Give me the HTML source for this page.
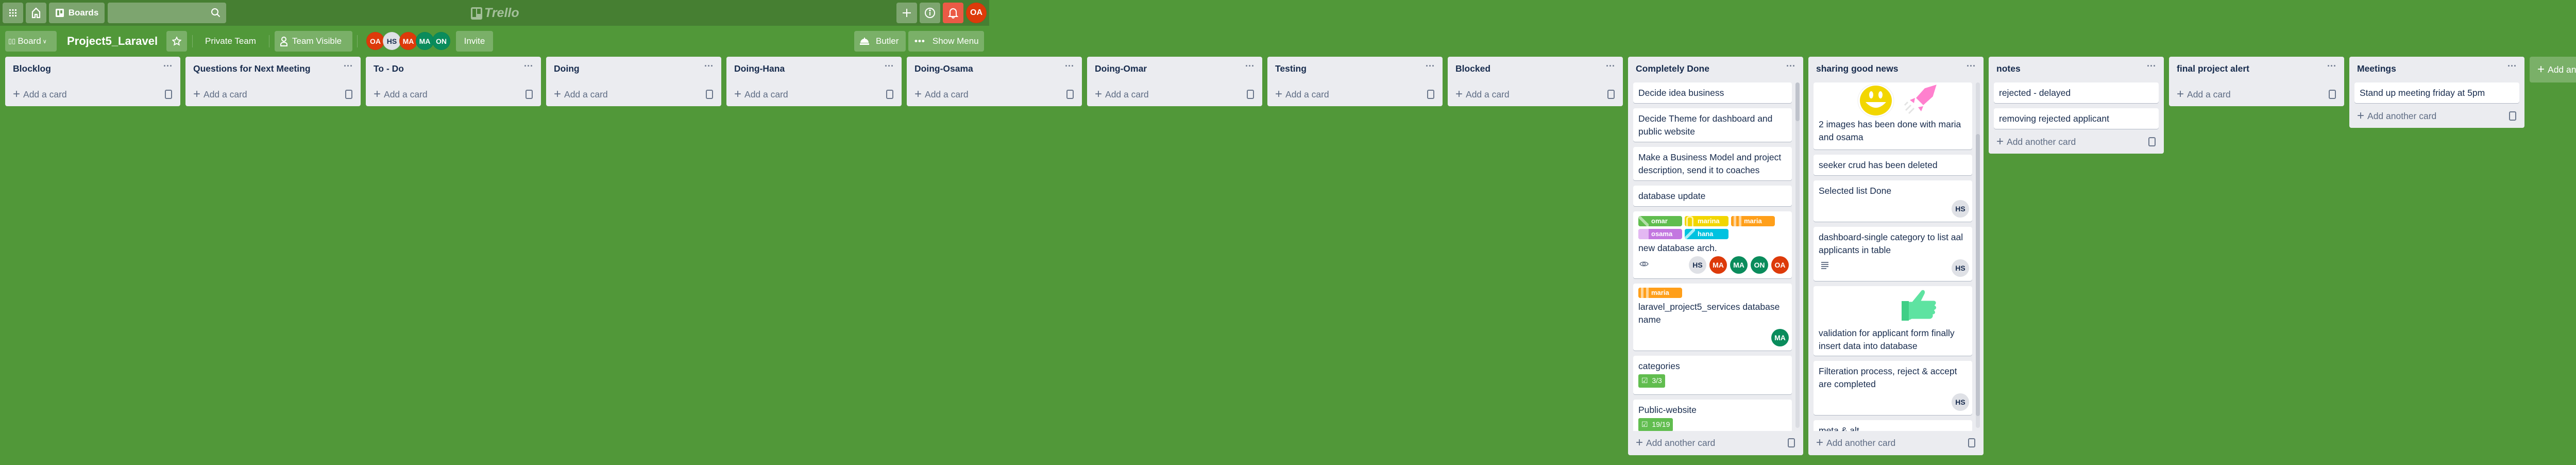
<!DOCTYPE html>
<html><head><meta charset="utf-8"><style>
*{box-sizing:border-box;margin:0;padding:0}
body{width:5260px;height:902px;overflow:hidden;background:#519839;font-family:"Liberation Sans",sans-serif;color:#172b4d;position:relative}
.top{position:absolute;left:0;top:0;width:1920px;height:50px;background:#467f32}
.hb{position:absolute;top:5px;height:40px;background:rgba(255,255,255,.3);border-radius:4px;color:#fff;display:flex;align-items:center;justify-content:center;font-size:17px;font-weight:bold}
.bb{position:absolute;top:60px;height:40px;border-radius:4px;color:#fff;display:flex;align-items:center;font-size:17px;padding:0 10px}
.bg{background:rgba(255,255,255,.24)}
.sep{position:absolute;top:68px;width:1px;height:24px;background:rgba(255,255,255,.25)}
.av{position:absolute;width:35px;height:35px;border-radius:50%;color:#fff;font-size:14px;font-weight:bold;display:flex;align-items:center;justify-content:center;border:1px solid rgba(0,0,0,.05)}
.list{position:absolute;top:110px;width:340px;background:#ebecf0;border-radius:4px}
.lh{height:50px;padding:13px 12px 0 15px;font-size:17.5px;font-weight:bold;position:relative;color:#172b4d}
.dots{position:absolute;right:15px;top:8px;font-size:18px;color:#6b778c;letter-spacing:0px}
.cards{padding:0 10px}
.card{background:#fff;border-radius:4px;box-shadow:0 1px 0 rgba(9,30,66,.25);padding:7.5px 10px;font-size:17.5px;line-height:25px;margin-bottom:10px;position:relative;color:#172b4d}
.add{height:46px;padding:0 15px;display:flex;align-items:center;font-size:17.5px;color:#5e6c84;position:relative}
.add .pl{font-size:24px;margin-right:6px;font-weight:300}
.tmpl{position:absolute;right:16px;top:14px;width:14px;height:18px;border:2px solid #6b778c;border-radius:3px}
.lab{display:inline-block;width:85px;height:20px;border-radius:4px;color:#fff;font-size:13px;font-weight:bold;line-height:20px;padding-left:25px;margin-right:5px;margin-bottom:5px;position:relative;overflow:hidden}
.lab i{position:absolute;left:0;top:0;width:20px;height:20px}
.ca{position:absolute;width:34px;height:34px;border-radius:50%;color:#fff;font-size:14px;font-weight:bold;display:flex;align-items:center;justify-content:center}
.badge{display:inline-flex;align-items:center;background:#61bd4f;color:#fff;border-radius:3px;height:26px;padding:0 6px;font-size:14px;margin-top:3px}
.sb{position:absolute;width:8px;border-radius:4px;background:#dadce2}
.sbt{position:absolute;width:8px;border-radius:4px;background:#bfc3cc}
</style></head><body>
<div class="top">
 <div class="hb" style="left:5px;width:40px"><svg width="16" height="16" viewBox="0 0 16 16" fill="#fff"><rect x="1" y="1" width="3" height="3"/><rect x="6.5" y="1" width="3" height="3"/><rect x="12" y="1" width="3" height="3"/><rect x="1" y="6.5" width="3" height="3"/><rect x="6.5" y="6.5" width="3" height="3"/><rect x="12" y="6.5" width="3" height="3"/><rect x="1" y="12" width="3" height="3"/><rect x="6.5" y="12" width="3" height="3"/><rect x="12" y="12" width="3" height="3"/></svg></div>
 <div class="hb" style="left:50px;width:40px"><svg width="20" height="22" viewBox="0 0 20 22" fill="none" stroke="#fff" stroke-width="2.2"><path d="M3 20V9l7-7 7 7v11h-5v-6H8v6z"/></svg></div>
 <div class="hb" style="left:95px;width:108px"><svg width="18" height="18" viewBox="0 0 18 18" style="margin-right:8px"><rect x="1" y="1" width="16" height="16" rx="2" fill="#fff"/><rect x="4" y="4" width="4" height="10" fill="#6f9f5e"/><rect x="10" y="4" width="4" height="6" fill="#6f9f5e"/></svg>Boards</div>
 <div class="hb" style="left:209px;width:230px;justify-content:flex-end;padding-right:10px"><svg width="20" height="20" viewBox="0 0 20 20" fill="none" stroke="#fff" stroke-width="2"><circle cx="8" cy="8" r="6"/><path d="M12.5 12.5l5 5"/></svg></div>
 <div style="position:absolute;left:914px;top:11px;display:flex;align-items:center;color:rgba(255,255,255,.5);font-size:25px;font-weight:bold;font-style:italic"><svg width="22" height="24" viewBox="0 0 22 24" style="margin-right:4px"><rect x="0" y="0" width="22" height="24" rx="3" fill="rgba(255,255,255,.5)"/><rect x="3" y="3" width="7" height="16" fill="#467f32"/><rect x="12" y="3" width="7" height="10" fill="#467f32"/></svg>Trello</div>
 <div class="hb" style="left:1740px;width:40px"><svg width="20" height="20" viewBox="0 0 20 20" stroke="#fff" stroke-width="2"><path d="M10 2v16M2 10h16"/></svg></div>
 <div class="hb" style="left:1785px;width:40px"><svg width="22" height="22" viewBox="0 0 22 22" fill="none" stroke="#fff" stroke-width="2"><circle cx="11" cy="11" r="9"/><path d="M11 9v7"/><circle cx="11" cy="6" r=".8" fill="#fff"/></svg></div>
 <div class="hb" style="left:1830px;width:40px;background:#eb5a46"><svg width="20" height="22" viewBox="0 0 20 22" fill="none" stroke="#fff" stroke-width="2"><path d="M4 16V9a6 6 0 0112 0v7l2 2H2zM8 19a2 2 0 004 0"/></svg></div>
 <div class="av" style="left:1875px;top:5px;width:40px;height:40px;background:#dd3a0a;font-size:16px">OA</div>
</div>
<div class="bb bg" style="left:10px;width:100px;padding:0 6px"><span style="font-size:13px;margin-right:4px">▯▯</span>Board <span style="font-size:11px;margin-left:3px">∨</span></div>
<div class="bb" style="left:120px;font-size:22px;font-weight:bold">Project5_Laravel</div>
<div class="bb bg" style="left:323px;width:40px;justify-content:center;padding:0"><svg width="18" height="18" viewBox="0 0 20 20" fill="none" stroke="#fff" stroke-width="2"><path d="M10 1.5l2.6 5.5 6 .7-4.5 4.1 1.2 5.9L10 14.8 4.7 17.7l1.2-5.9L1.4 7.7l6-.7z"/></svg></div>
<div class="sep" style="left:373px"></div>
<div class="bb" style="left:388px">Private Team</div>
<div class="sep" style="left:522px"></div>
<div class="bb bg" style="left:533px;width:151px"><svg width="16" height="20" viewBox="0 0 16 20" fill="none" stroke="#fff" stroke-width="2" style="margin-right:8px"><circle cx="8" cy="6" r="4"/><path d="M2 19v-3a6 4 0 0112 0v3z"/></svg>Team Visible</div>
<div class="sep" style="left:693px"></div>
<div class="av" style="left:711px;top:62px;background:#dd3a0a">OA</div>
<div class="av" style="left:743px;top:62px;background:#dfe1e6;color:#172b4d">HS</div>
<div class="av" style="left:775px;top:62px;background:#dd3a0a">MA</div>
<div class="av" style="left:807px;top:62px;background:#0a8c5c">MA</div>
<div class="av" style="left:839px;top:62px;background:#0a8c5c">ON</div>
<div class="bb bg" style="left:885px;width:72px;justify-content:center">Invite</div>
<div class="bb bg" style="left:1658px;width:100px"><svg width="20" height="16" viewBox="0 0 20 16" fill="#fff" style="margin-right:12px"><path d="M2 11a8 8 0 0116 0z"/><rect x="1" y="12" width="18" height="3"/><rect x="9" y="1" width="2" height="3"/></svg>Butler</div>
<div class="bb bg" style="left:1763px;width:147px;padding-left:12px"><span style="margin-right:14px;font-weight:bold;letter-spacing:1px">•••</span>Show Menu</div>

<!-- simple lists -->
<div class="list" style="left:10px"><div class="lh">Blocklog<span class="dots">···</span></div><div class="add"><span class="pl">+</span>Add a card<span class="tmpl"></span></div></div>
<div class="list" style="left:360px"><div class="lh">Questions for Next Meeting<span class="dots">···</span></div><div class="add"><span class="pl">+</span>Add a card<span class="tmpl"></span></div></div>
<div class="list" style="left:710px"><div class="lh">To - Do<span class="dots">···</span></div><div class="add"><span class="pl">+</span>Add a card<span class="tmpl"></span></div></div>
<div class="list" style="left:1060px"><div class="lh">Doing<span class="dots">···</span></div><div class="add"><span class="pl">+</span>Add a card<span class="tmpl"></span></div></div>
<div class="list" style="left:1410px"><div class="lh">Doing-Hana<span class="dots">···</span></div><div class="add"><span class="pl">+</span>Add a card<span class="tmpl"></span></div></div>
<div class="list" style="left:1760px"><div class="lh">Doing-Osama<span class="dots">···</span></div><div class="add"><span class="pl">+</span>Add a card<span class="tmpl"></span></div></div>
<div class="list" style="left:2110px"><div class="lh">Doing-Omar<span class="dots">···</span></div><div class="add"><span class="pl">+</span>Add a card<span class="tmpl"></span></div></div>
<div class="list" style="left:2460px"><div class="lh">Testing<span class="dots">···</span></div><div class="add"><span class="pl">+</span>Add a card<span class="tmpl"></span></div></div>
<div class="list" style="left:2810px"><div class="lh">Blocked<span class="dots">···</span></div><div class="add"><span class="pl">+</span>Add a card<span class="tmpl"></span></div></div>

<!-- Completely Done -->
<div class="list" style="left:3160px;height:773px">
 <div class="lh">Completely Done<span class="dots">···</span></div>
 <div class="cards" style="height:676px;overflow:hidden;padding-right:22px">
  <div class="card">Decide idea business</div>
  <div class="card">Decide Theme for dashboard and public website</div>
  <div class="card">Make a Business Model and project description, send it to coaches</div>
  <div class="card">database update</div>
  <div class="card" style="height:130px">
   <div style="line-height:0;margin-top:1px"><span class="lab" style="background:#61bd4f"><i style="background:linear-gradient(45deg,#61bd4f 40%,#b3dfa8 40%,#b3dfa8 60%,#61bd4f 60%)"></i>omar</span><span class="lab" style="background:#f2d600"><i style="background:#f2d600;border:3px solid #fff3a8;border-bottom:none;border-radius:6px 6px 0 0;width:14px;left:3px"></i>marina</span><span class="lab" style="background:#ff9f1a"><i style="background:linear-gradient(90deg,#ff9f1a 25%,#ffd59a 25%,#ffd59a 50%,#ff9f1a 50%,#ff9f1a 75%,#ffd59a 75%)"></i>maria</span><br><span class="lab" style="background:#c377e0"><i style="background:#e3b8f2"></i>osama</span><span class="lab" style="background:#00c2e0"><i style="background:linear-gradient(135deg,#00c2e0 40%,#a6ecf7 40%,#a6ecf7 60%,#00c2e0 60%)"></i>hana</span></div>
   <div>new database arch.</div>
   <svg style="position:absolute;left:12px;top:96px" width="18" height="12" viewBox="0 0 18 12" fill="none" stroke="#6b778c" stroke-width="1.6"><path d="M1 6c3-5 13-5 16 0-3 5-13 5-16 0z"/><circle cx="9" cy="6" r="2.5"/></svg>
   <div class="ca" style="left:108px;top:87px;background:#dfe1e6;color:#172b4d">HS</div>
   <div class="ca" style="left:148px;top:87px;background:#dd3a0a">MA</div>
   <div class="ca" style="left:188px;top:87px;background:#0a8c5c">MA</div>
   <div class="ca" style="left:228px;top:87px;background:#0a8c5c">ON</div>
   <div class="ca" style="left:268px;top:87px;background:#dd3a0a">OA</div>
  </div>
  <div class="card" style="height:130px">
   <div style="line-height:0"><span class="lab" style="background:#ff9f1a"><i style="background:linear-gradient(90deg,#ff9f1a 25%,#ffd59a 25%,#ffd59a 50%,#ff9f1a 50%,#ff9f1a 75%,#ffd59a 75%)"></i>maria</span></div>
   <div>laravel_project5_services database name</div>
   <div class="ca" style="left:268px;top:88px;background:#0a8c5c">MA</div>
  </div>
  <div class="card" style="height:75px">categories<br><span class="badge">☑&nbsp; 3/3</span></div>
  <div class="card" style="height:75px">Public-website<br><span class="badge">☑&nbsp; 19/19</span></div>
 </div>
 <div class="sb" style="left:325px;top:50px;height:670px"></div>
 <div class="sbt" style="left:325px;top:50px;height:75px"></div>
 <div class="add"><span class="pl">+</span>Add another card<span class="tmpl"></span></div>
</div>

<!-- sharing good news -->
<div class="list" style="left:3510px;height:773px">
 <div class="lh">sharing good news<span class="dots">···</span></div>
 <div class="cards" style="height:676px;overflow:hidden;padding-right:22px">
  <div class="card" style="height:130px;padding-top:69px">
   <svg style="position:absolute;left:85px;top:2px" width="72" height="66" viewBox="0 0 72 66"><ellipse cx="36" cy="33" rx="35" ry="32" fill="#fff" stroke="#eee"/><ellipse cx="36" cy="33" rx="31" ry="29" fill="#f2d600"/><ellipse cx="27" cy="22" rx="4" ry="7" fill="#fff"/><ellipse cx="45" cy="22" rx="4" ry="7" fill="#fff"/><path d="M16 36q20 22 40 0z" fill="#fff"/></svg>
   <svg style="position:absolute;left:175px;top:0" width="72" height="64" viewBox="0 0 72 64"><path d="M66 2L40 10 22 30l16 16 20-18z" fill="#ff80ce" stroke="#fff" stroke-width="3"/><path d="M22 30l-10 4 8 6M38 46l-4 10-6-8" fill="#ff80ce"/><path d="M14 44l-10 10M20 50l-10 10M8 38L2 44" stroke="#e4e4e4" stroke-width="3"/></svg>
   2 images has been done with maria and osama</div>
  <div class="card">seeker crud has been deleted</div>
  <div class="card" style="height:80px">Selected list Done<div class="ca" style="left:268px;top:38px;background:#dfe1e6;color:#172b4d">HS</div></div>
  <div class="card" style="height:105px">dashboard-single category to list aal applicants in table
   <div style="position:absolute;left:15px;top:68px;width:14px"><div style="height:2px;background:#6b778c;margin-bottom:2px"></div><div style="height:2px;background:#6b778c;margin-bottom:2px"></div><div style="height:2px;background:#6b778c;margin-bottom:2px"></div><div style="height:2px;background:#6b778c;width:10px"></div></div>
   <div class="ca" style="left:268px;top:63px;background:#dfe1e6;color:#172b4d">HS</div></div>
  <div class="card" style="height:135px;padding-top:79px">
   <svg style="position:absolute;left:165px;top:3px" width="78" height="68" viewBox="0 0 78 68"><path d="M6 26h20l18-22c6-3 10 2 8 8l-6 12h22c6 0 8 6 4 10 4 3 3 8-1 10 3 4 1 8-3 9 1 5-3 9-8 9H26l-4 2H6z" fill="#5ee3a1" stroke="#fff" stroke-width="3"/><rect x="6" y="26" width="14" height="38" fill="#3fcf86"/></svg>
   validation for applicant form finally insert data into database</div>
  <div class="card" style="height:105px">Filteration process, reject &amp; accept are completed<div class="ca" style="left:268px;top:63px;background:#dfe1e6;color:#172b4d">HS</div></div>
  <div class="card">meta &amp; alt</div>
 </div>
 <div class="sb" style="left:325px;top:50px;height:670px"></div>
 <div class="sbt" style="left:325px;top:150px;height:547px"></div>
 <div class="add"><span class="pl">+</span>Add another card<span class="tmpl"></span></div>
</div>

<div class="list" style="left:3860px"><div class="lh">notes<span class="dots">···</span></div><div class="cards"><div class="card">rejected - delayed</div><div class="card">removing rejected applicant</div></div><div class="add" style="margin-top:-8px"><span class="pl">+</span>Add another card<span class="tmpl"></span></div></div>
<div class="list" style="left:4210px"><div class="lh">final project alert<span class="dots">···</span></div><div class="add"><span class="pl">+</span>Add a card<span class="tmpl"></span></div></div>
<div class="list" style="left:4560px"><div class="lh">Meetings<span class="dots">···</span></div><div class="cards"><div class="card">Stand up meeting friday at 5pm</div></div><div class="add" style="margin-top:-8px"><span class="pl">+</span>Add another card<span class="tmpl"></span></div></div>
<div style="position:absolute;left:4910px;top:110px;width:340px;height:50px;background:rgba(255,255,255,.24);border-radius:4px;color:#fff;font-size:17.5px;display:flex;align-items:center;padding-left:15px"><span style="font-size:24px;margin-right:6px">+</span>Add another list</div>
</body></html>
